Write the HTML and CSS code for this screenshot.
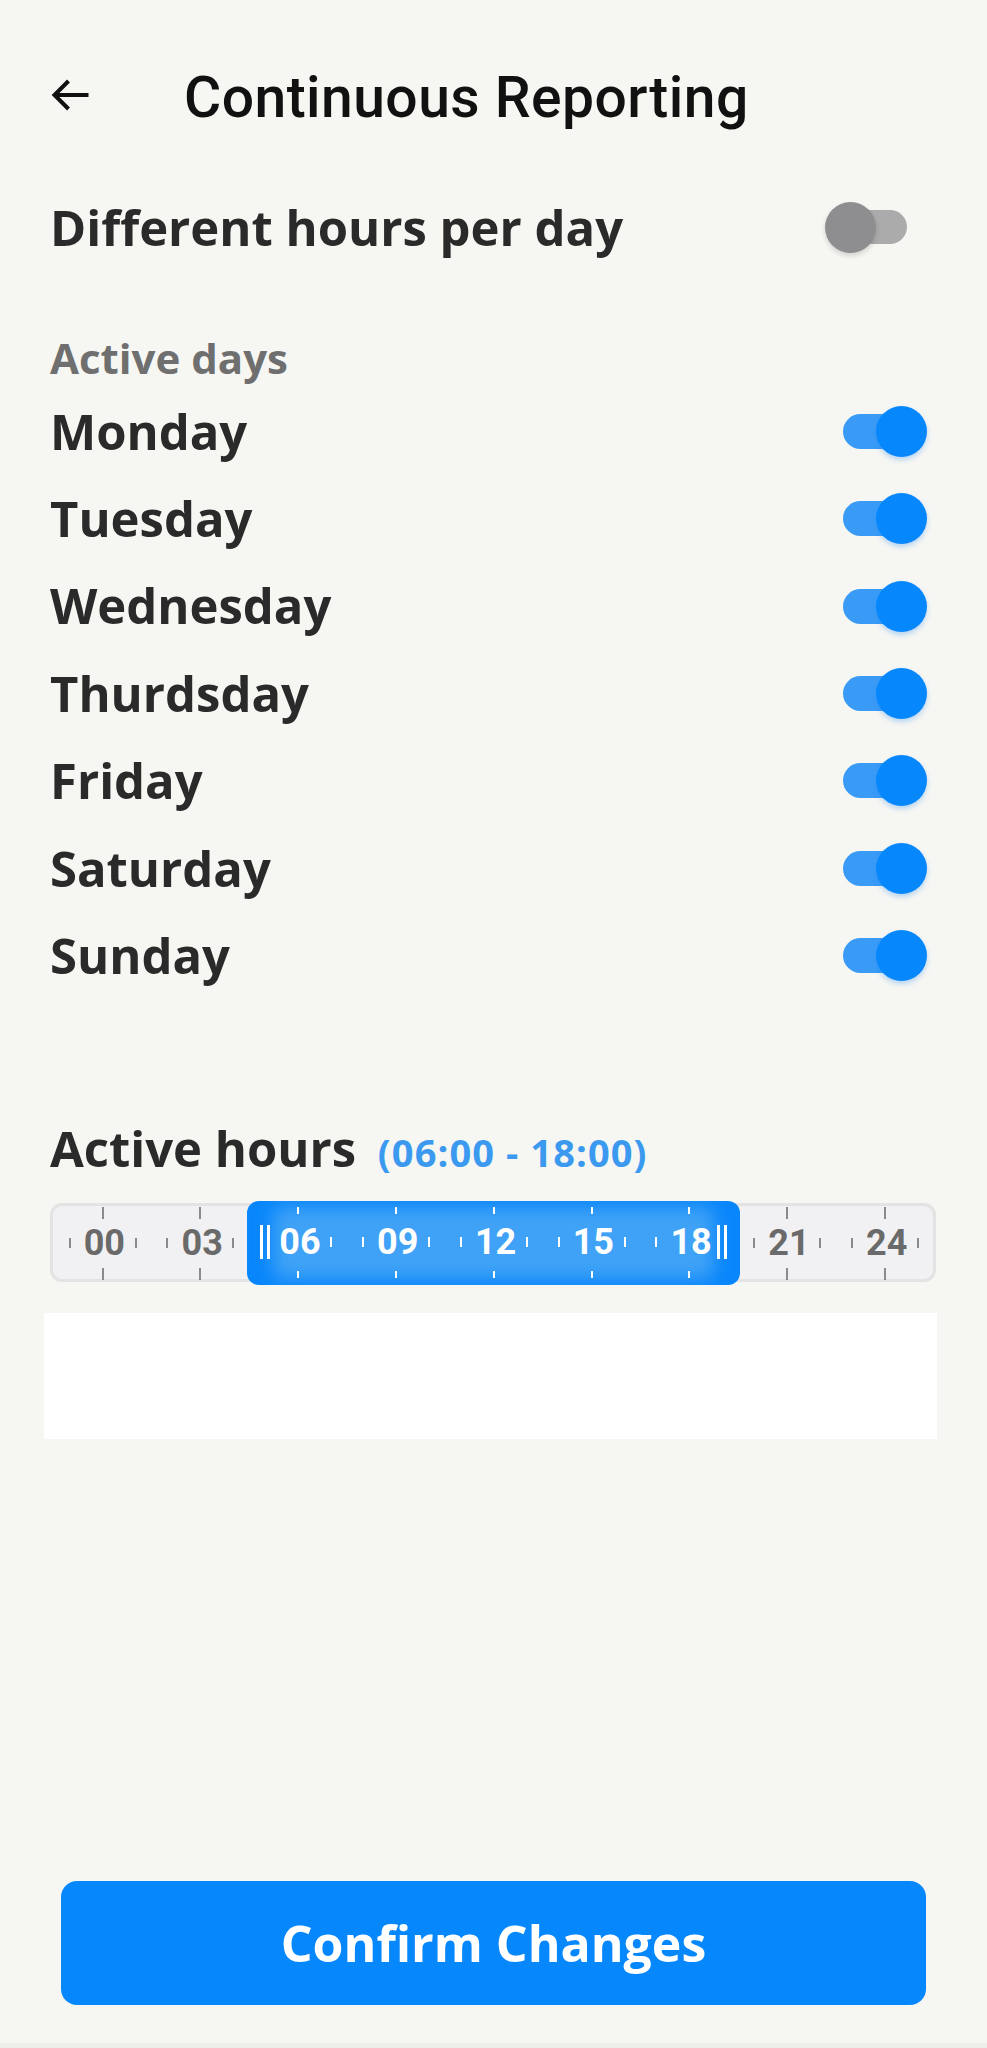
FILE: index.html
```html
<!DOCTYPE html>
<html lang="en">
<head>
<meta charset="utf-8">
<title>Continuous Reporting</title>
<link rel="stylesheet" href="styles.css">
</head>
<body>
<div class="screen">
  <header class="topbar">
    <svg class="back" viewBox="0 0 40 40" width="40" height="40" aria-hidden="true">
      <path d="M38 20H4M18 6L4 20l14 14" fill="none" stroke="#111" stroke-width="4" stroke-linecap="butt" stroke-linejoin="miter"/>
    </svg>
    <h1 class="title">Continuous Reporting</h1>
  </header>

  <div class="row row-main">
    <span class="row-text">Different hours per day</span>
    <span class="toggle off"><span class="track"></span><span class="knob"></span></span>
  </div>

  <div class="section-label">Active days</div>

  <ul class="days">
    <li class="row day"><span class="row-text">Monday</span><span class="toggle on"><span class="track"></span><span class="knob"></span></span></li>
    <li class="row day"><span class="row-text">Tuesday</span><span class="toggle on"><span class="track"></span><span class="knob"></span></span></li>
    <li class="row day"><span class="row-text">Wednesday</span><span class="toggle on"><span class="track"></span><span class="knob"></span></span></li>
    <li class="row day"><span class="row-text">Thurdsday</span><span class="toggle on"><span class="track"></span><span class="knob"></span></span></li>
    <li class="row day"><span class="row-text">Friday</span><span class="toggle on"><span class="track"></span><span class="knob"></span></span></li>
    <li class="row day"><span class="row-text">Saturday</span><span class="toggle on"><span class="track"></span><span class="knob"></span></span></li>
    <li class="row day"><span class="row-text">Sunday</span><span class="toggle on"><span class="track"></span><span class="knob"></span></span></li>
  </ul>

  <h2 class="hours-title">Active hours <span class="hours-range">(06:00 - 18:00)</span></h2>

  <div class="slider">
    <div class="slider-track"></div>
    <div class="slider-range"></div>
    <div class="scale">
      <div class="cell"><i class="major"></i><div class="mid"><span class="slot"><i class="minor"></i></span><span class="lbl">00</span><span class="slot"><i class="minor"></i></span></div><i class="major"></i></div>
      <div class="cell"><i class="major"></i><div class="mid"><span class="slot"><i class="minor"></i></span><span class="lbl">03</span><span class="slot"><i class="minor"></i></span></div><i class="major"></i></div>
      <div class="cell sel"><i class="major"></i><div class="mid"><span class="slot"><i class="handle"></i></span><span class="lbl">06</span><span class="slot"><i class="minor"></i></span></div><i class="major"></i></div>
      <div class="cell sel"><i class="major"></i><div class="mid"><span class="slot"><i class="minor"></i></span><span class="lbl">09</span><span class="slot"><i class="minor"></i></span></div><i class="major"></i></div>
      <div class="cell sel"><i class="major"></i><div class="mid"><span class="slot"><i class="minor"></i></span><span class="lbl">12</span><span class="slot"><i class="minor"></i></span></div><i class="major"></i></div>
      <div class="cell sel"><i class="major"></i><div class="mid"><span class="slot"><i class="minor"></i></span><span class="lbl">15</span><span class="slot"><i class="minor"></i></span></div><i class="major"></i></div>
      <div class="cell sel"><i class="major"></i><div class="mid"><span class="slot"><i class="minor"></i></span><span class="lbl">18</span><span class="slot"><i class="handle"></i></span></div><i class="major"></i></div>
      <div class="cell"><i class="major"></i><div class="mid"><span class="slot"><i class="minor"></i></span><span class="lbl">21</span><span class="slot"><i class="minor"></i></span></div><i class="major"></i></div>
      <div class="cell"><i class="major"></i><div class="mid"><span class="slot"><i class="minor"></i></span><span class="lbl">24</span><span class="slot"><i class="minor"></i></span></div><i class="major"></i></div>
    </div>
  </div>

  <div class="white-box"></div>

  <button class="confirm" type="button">Confirm Changes</button>
  <div class="bottom-strip"></div>
</div>
</body>
</html>
```

FILE: styles.css
```css
html, body {
  margin: 0;
  padding: 0;
}
body {
  background: #f6f6f3;
  font-family: "Open Sans", "Noto Sans", sans-serif;
  color: #2a2a2a;
}
.screen {
  display: flex;
  flex-direction: column;
  min-height: 2048px;
  box-sizing: border-box;
}

/* header */
.topbar {
  display: flex;
  align-items: flex-start;
  height: 80px;
  margin-top: 58px;
  padding-left: 50px;
}
.back {
  display: block;
  width: 41px;
  height: 40px;
  margin-top: 17px;
  flex: none;
}
.title {
  margin: 0 0 0 93px;
  font-family: Roboto, "Liberation Sans", sans-serif;
  font-weight: 500;
  font-size: 57px;
  line-height: 80px;
  color: #111;
  letter-spacing: 0.45px;
}

/* rows */
.row {
  display: flex;
  align-items: center;
  justify-content: space-between;
  padding-left: 50px;
}
.row-text {
  font-weight: 700;
  font-size: 49px;
  color: #2a2a2a;
  white-space: nowrap;
}
.row-main {
  height: 70px;
  line-height: 70px;
  margin-top: 54px;
  padding-right: 80px;
}
.section-label {
  margin-top: 68px;
  padding-left: 50px;
  font-weight: 700;
  font-size: 42px;
  line-height: 56px;
  color: #6f6f6f;
}
.days {
  list-style: none;
  margin: 1.6px 0 0;
  padding: 0;
}
.day {
  height: 87.4px;
  line-height: 87.4px;
  padding-right: 60px;
}

/* toggles */
.toggle {
  position: relative;
  display: block;
  width: 84px;
  height: 51px;
  flex: none;
}
.toggle .track {
  position: absolute;
  top: 8px;
  width: 74px;
  height: 35px;
  border-radius: 18px;
}
.toggle .knob {
  position: absolute;
  top: 0;
  width: 51px;
  height: 51px;
  border-radius: 50%;
}
.toggle.on .track {
  left: 0;
  background: #3a9bf6;
}
.toggle.on .knob {
  right: 0;
  background: #0787fc;
  box-shadow: 0 3px 5px rgba(20, 130, 240, 0.28);
}
.toggle.off {
  width: 82px;
}
.toggle.off .track {
  left: 8px;
  top: 8px;
  height: 34px;
  background: #ababab;
}
.toggle.off .knob {
  left: 0;
  background: #8e8e91;
  box-shadow: 0 3px 5px rgba(0, 0, 0, 0.14);
}

/* active hours */
.hours-title {
  margin: 113.5px 0 0;
  padding-left: 50px;
  font-weight: 700;
  font-size: 49px;
  line-height: 70px;
  color: #2a2a2a;
  white-space: nowrap;
}
.hours-range {
  margin-left: 9px;
  font-weight: 700;
  font-size: 38px;
  color: #3b9af0;
  letter-spacing: 1.1px;
}

.slider {
  position: relative;
  height: 84px;
  margin: 14px 51px 0 50px;
}
.slider-track {
  position: absolute;
  left: 0;
  right: 0;
  top: 2px;
  bottom: 3px;
  background: #f1f1f3;
  border: 3px solid #e3e3e3;
  border-radius: 12px;
  box-sizing: border-box;
}
.slider-range {
  position: absolute;
  left: 196.7px;
  width: 493.3px;
  top: 0;
  bottom: 0;
  background: #0886fb;
  border-radius: 12px;
  overflow: hidden;
}
.slider-range::before {
  content: "";
  position: absolute;
  top: 6px;
  bottom: 6px;
  left: 26px;
  right: 26px;
  background: #40a2f6;
  border-radius: 8px;
  filter: blur(9px);
}
.scale {
  position: relative;
  display: grid;
  grid-template-columns: repeat(9, 97.8px);
  padding-left: 3.8px;
  height: 100%;
}
.cell {
  display: flex;
  flex-direction: column;
  align-items: center;
  justify-content: space-between;
  padding: 6px 0 5px;
  box-sizing: border-box;
  height: 84px;
}
.major {
  display: block;
  width: 2px;
  height: 12px;
  background: #8a8a8a;
}
.mid {
  display: flex;
  align-items: center;
  gap: 8px;
  height: 36px;
}
.slot {
  display: flex;
  justify-content: center;
  align-items: center;
  width: 12px;
}
.minor {
  display: block;
  width: 2px;
  height: 10px;
  background: #8a8a8a;
}
.lbl {
  width: 38px;
  text-align: center;
  font-family: Roboto, "Liberation Sans", sans-serif;
  font-weight: 700;
  font-size: 36px;
  line-height: 36px;
  color: #6a6a6a;
}
.cell.sel {
  padding: 6px 0 7px;
}
.cell.sel .major {
  height: 7px;
  background: #ffffff;
}
.cell.sel .minor {
  background: #ffffff;
}
.cell.sel .lbl {
  color: #ffffff;
}
.handle {
  display: block;
  width: 4px;
  height: 34px;
  border-left: 3.5px solid #ffffff;
  border-right: 3.5px solid #ffffff;
}

.white-box {
  height: 126px;
  margin: 28px 50px 0 44px;
  background: #ffffff;
}

.confirm {
  display: block;
  margin: auto 61px 38px 61px;
  height: 124px;
  border: none;
  border-radius: 16px;
  background: #0787fc;
  color: #ffffff;
  font-family: "Open Sans", "Noto Sans", sans-serif;
  font-weight: 700;
  font-size: 50px;
  padding: 0;
  cursor: pointer;
}
.bottom-strip {
  height: 5px;
  background: #eeeeeb;
}
```
